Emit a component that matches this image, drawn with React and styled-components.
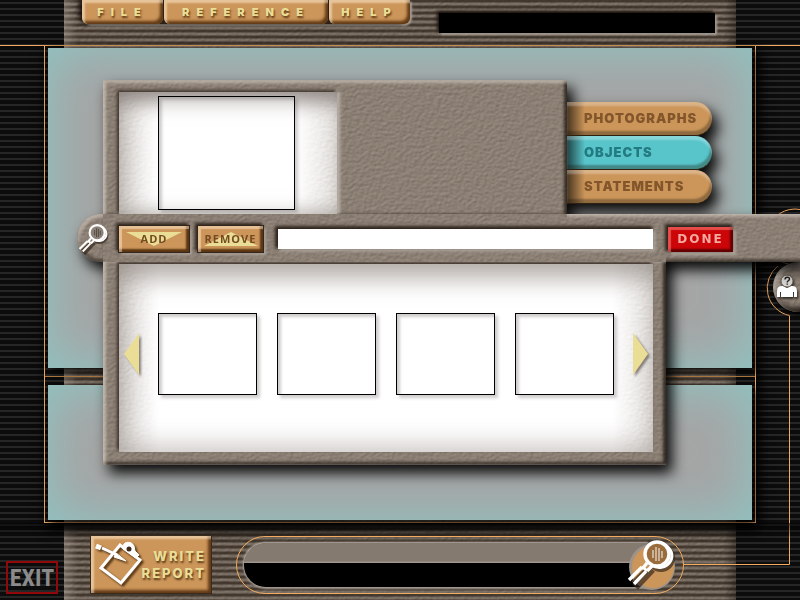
import React from "react";
import styled, { createGlobalStyle, css } from "styled-components";

const orange = "#f2ab60";
const copper = "#cc965a";
const cream = "#eadd96";

const leather = (light, depth) =>
  `url("data:image/svg+xml,${encodeURIComponent(
    `<svg xmlns='http://www.w3.org/2000/svg' width='240' height='240'><filter id='f' x='0' y='0' width='100%' height='100%' color-interpolation-filters='sRGB'><feTurbulence type='fractalNoise' baseFrequency='0.26 0.34' numOctaves='2' seed='8' stitchTiles='stitch'/><feDiffuseLighting surfaceScale='${depth}' diffuseConstant='1.18' lighting-color='${light}'><feDistantLight azimuth='235' elevation='58'/></feDiffuseLighting></filter><rect width='240' height='240' filter='url(#f)'/></svg>`
  )}")`;

const taupeLeather = leather("#8b7f74", 0.45);
const paleLeather = leather("#e2dfdc", 0.22);

const GlobalStyle = createGlobalStyle`
  *, *::before, *::after { box-sizing: border-box; }
  body { margin: 0; background: #0c0c0c; font-family: Inter, "Liberation Sans", sans-serif; }
  button, input { font: inherit; }
`;

const Page = styled.div`
  position: relative;
  isolation: isolate;
  display: flex;
  flex-direction: column;
  min-height: 100vh;
  overflow: hidden;
  background: repeating-linear-gradient(#0c0c0c 0 2px, #262626 2px 4px, #0c0c0c 4px 6px);

  &::before {
    content: "";
    position: absolute;
    z-index: -1;
    inset: 0 64px;
    background:
      linear-gradient(90deg, rgba(190, 180, 170, 0.35), transparent 14px, transparent calc(100% - 12px), rgba(0, 0, 0, 0.35)),
      repeating-linear-gradient(rgba(20, 10, 0, 0.6) 0 2px, rgba(20, 14, 8, 0.15) 3px 5px, rgba(20, 10, 0, 0.6) 6px),
      ${taupeLeather};
  }
`;

const Header = styled.header`
  display: flex;
  align-items: flex-start;
  height: 46px;
  padding: 0 85px 0 82px;
  border-bottom: 1px solid ${orange};
`;

const Menu = styled.nav`
  display: flex;
  gap: 1px;
  background: #2c2118;
  border-radius: 0 0 8px 8px;
  box-shadow: -3px 0 4px #17110c, 2px 2px 2px #aaa198;
`;

const raised = css`
  border: 0;
  background: ${copper};
  box-shadow:
    inset 3px 3px 2px rgba(255, 235, 210, 0.55),
    inset -3px -3px 3px rgba(70, 35, 5, 0.8);
`;

const MenuButton = styled.button`
  ${raised}
  width: ${(p) => p.$width};
  height: 24px;
  padding: 0;
  border-radius: 0 0 6px 6px;
  color: ${cream};
  font-size: 11px;
  font-weight: 900;
  line-height: 16px;
  letter-spacing: 7px;
  text-align: center;
  white-space: nowrap;
  text-shadow: 1px 2px 2px #5c3a16;
`;

const Display = styled.div`
  flex: 1;
  height: 20px;
  margin: 13px 0 0 29px;
  background: #000;
  box-shadow: -2px -2px 3px #1c140e, 2px 2px 2px #a89f97;
`;

const Frame = styled.main`
  display: flex;
  flex: 1;
  flex-direction: column;
  margin: 0 44px;
  padding: 2px 3px;
  border: solid ${orange};
  border-width: 0 1px 1px;
  box-shadow: 3px 6px 12px #000;
`;

const Panel = styled.section`
  flex: ${(p) => p.$share} 0 0px;
  background: #a5a5a5;
  box-shadow: inset 0 0 50px 4px #8fc4c2, 3px 5px 9px rgba(0, 0, 0, 0.85);
`;

const Divider = styled.hr`
  width: calc(100% + 6px);
  height: 1px;
  margin: 8px -3px;
  border: 0;
  background: #a8743d;
`;

const Footer = styled.footer`
  display: flex;
  align-items: flex-start;
  padding: 13px 116px 6px 6px;
  background: linear-gradient(rgba(0, 0, 0, 0.55), transparent 16px);
`;

const ExitButton = styled.button`
  width: 52px;
  height: 33px;
  margin: 25px 33px 0 0;
  padding: 0;
  border: 2px solid #900809;
  background: transparent;
  color: #8b8b8b;
  font-family: "Liberation Sans Narrow", "Roboto Condensed", "Liberation Sans", sans-serif;
  font-size: 24px;
  font-weight: 700;
  line-height: 28px;
`;

const ReportButton = styled.button`
  ${raised}
  display: flex;
  align-items: center;
  justify-content: space-between;
  width: 120px;
  height: 57px;
  margin-right: 25px;
  padding: 0 5px 0 3px;
  outline: 1px solid #3a2a1b;
  color: ${cream};
  text-align: right;

  svg { flex: none; margin-right: -14px; filter: drop-shadow(2px 2px 1px #4d2e10); }
`;

const ReportLine = styled.span`
  display: block;
  font-size: 13px;
  font-weight: 800;
  line-height: 17px;
  letter-spacing: 2px;
  text-shadow: 1px 2px 2px #5c3a16;
`;

const SearchDock = styled.div`
  display: flex;
  flex: 1;
  height: 58px;
  padding: 6px 4px 6px 7px;
  border: 1px solid ${orange};
  border-radius: 29px;
`;

const SearchScreen = styled.div`
  flex: 1;
  height: 44px;
  margin-right: -24px;
  border-radius: 22px 0 0 22px;
  background: linear-gradient(#857a70 0 18px, #a0968d 19px 20px, #000 20px);
  box-shadow: -1px -1px 2px #b7aea6, 0 2px 2px #a0978e;
`;

const SearchButton = styled.button`
  width: 54px;
  height: 54px;
  margin: -6px 0 0;
  padding: 0;
  border: 0;
  background: none;
`;

const Connector = styled.svg`
  position: absolute;
  z-index: -1;
  top: 200px;
  right: 0;
`;

const ProfileButton = styled.button`
  position: absolute;
  top: 262px;
  right: -23px;
  width: 50px;
  height: 50px;
  padding: 0 0 0 3px;
  border: 0;
  border-radius: 50%;
  background: ${taupeLeather};
  box-shadow: inset 3px 3px 4px rgba(225, 218, 210, 0.5), inset -3px -4px 6px #1c150f, 2px 3px 5px #000;
  text-align: left;

  svg { display: block; filter: drop-shadow(1px 2px 1px #332a22); }
`;

const Workbench = styled.div`
  position: absolute;
  top: 80px;
  right: 0;
  left: 77px;
  filter: drop-shadow(6px 8px 7px rgba(0, 0, 0, 0.95));
`;

const UpperRow = styled.div`
  display: flex;
  padding: 0 88px 0 26px;
`;

const UpperPlate = styled.div`
  flex: 1;
  padding: 12px 16px 0;
  background: ${taupeLeather};
  box-shadow: inset 3px 3px 3px rgba(225, 216, 207, 0.6), inset -3px 0 3px rgba(25, 18, 12, 0.75);
`;

const well = css`
  background:
    linear-gradient(90deg, transparent, #fff 40px, #fff calc(100% - 40px), transparent),
    ${paleLeather};
`;

const PreviewWell = styled.div`
  ${well}
  width: 218px;
  height: 122px;
  padding: 4px 42px 4px 39px;
  box-shadow:
    inset 0 24px 20px -14px rgba(110, 100, 95, 0.65),
    inset 0 -14px 14px -10px rgba(130, 120, 112, 0.25),
    inset 8px 0 22px rgba(130, 120, 112, 0.4),
    -2px -2px 3px #3d332b, 3px 0 3px #bbb2aa;
`;

const Slot = styled.div`
  height: ${(p) => p.$height};
  border: 1px solid #000;
  background: rgba(255, 255, 255, 0.4);
  box-shadow: inset 3px 3px 3px rgba(100, 94, 90, 0.3), 3px 3px 3px rgba(100, 94, 90, 0.3);
`;

const Tabs = styled.div`
  display: flex;
  flex-direction: column;
  width: 145px;
  padding-top: 22px;
`;

const Tab = styled.button`
  height: 34px;
  padding: 0 0 1px 17px;
  border: 0;
  border-bottom: 1px solid #30200f;
  border-radius: 0 17px 17px 0;
  background: linear-gradient(90deg, rgba(0, 0, 0, 0.65), transparent 18px), ${(p) => (p.$active ? "#58c5ca" : copper)};
  color: ${(p) => (p.$active ? "#237b81" : "#82562a")};
  font-size: 13px;
  font-weight: 900;
  line-height: 18px;
  letter-spacing: 1px;
  text-align: left;
  box-shadow: inset 0 4px 2px rgba(255, 255, 255, 0.28), inset -2px -4px 2px rgba(30, 25, 15, 0.35);
`;

const ToolBar = styled.div`
  position: relative;
  z-index: 1;
  display: flex;
  align-items: center;
  height: 48px;
  margin-left: 26px;
  padding: 2px 67px 0 0;
  background:
    linear-gradient(rgba(225, 216, 207, 0.6), transparent) right top / 233px 5px no-repeat,
    linear-gradient(transparent, rgba(25, 18, 12, 0.7)) right bottom / 134px 5px no-repeat,
    ${taupeLeather};

  &::before {
    content: "";
    position: absolute;
    z-index: -1;
    top: 0;
    left: -26px;
    width: 26px;
    height: 48px;
    border-radius: 24px 0 0 24px;
    background: ${taupeLeather};
    box-shadow: inset 3px 3px 3px rgba(225, 216, 207, 0.5), inset 1px -3px 3px rgba(25, 18, 12, 0.5);
  }
`;

const LensButton = styled.button`
  width: 34px;
  height: 34px;
  margin: 0 8px 0 -26px;
  padding: 0;
  border: 0;
  background: none;
`;

const sunken = css`
  outline: 1px solid #33271d;
  box-shadow:
    inset 3px 3px 1px rgba(255, 235, 210, 0.5),
    inset -3px -3px 2px rgba(70, 35, 5, 0.85),
    -2px -2px 3px 1px #2e241c,
    3px 3px 2px #aaa198;
`;

const ActionButton = styled.button`
  ${sunken}
  display: grid;
  place-items: center;
  width: ${(p) => p.$width};
  height: 26px;
  margin-right: ${(p) => p.$gap};
  padding: 0;
  border: 0;
  background: ${copper};
  color: #744a20;
  font-family: "Open Sans", sans-serif;
  font-size: 11px;
  font-weight: 700;
  line-height: 24px;
  letter-spacing: 1px;

  & > * { grid-area: 1 / 1; }
`;

const Arrowhead = styled.svg`
  display: block;
`;

const EntryField = styled.input`
  flex: 1;
  min-width: 0;
  height: 20px;
  padding: 0 4px;
  border: 0;
  border-radius: 0;
  outline: 0;
  background: #fff;
  box-shadow: -2px -2px 3px 1px #2e241c, 2px 2px 3px #bbb2aa;
`;

const DoneButton = styled.button`
  width: 65px;
  height: 25px;
  margin-left: 15px;
  padding: 0;
  border: 0;
  background: #cc0508;
  color: #f5a9a0;
  font-family: "DejaVu Sans", sans-serif;
  font-size: 12px;
  font-weight: 700;
  line-height: 22px;
  letter-spacing: 2px;
  box-shadow:
    inset 3px 3px 1px rgba(255, 150, 140, 0.5),
    inset -3px -3px 2px rgba(80, 0, 0, 0.85),
    -2px -2px 3px 1px #2e241c,
    3px 3px 2px #aaa198;
`;

const LowerPlate = styled.div`
  margin: 0 134px 0 26px;
  padding: 2px 13px 13px 16px;
  background: ${taupeLeather};
  box-shadow: inset 3px 0 3px rgba(225, 216, 207, 0.6), inset -3px -3px 3px rgba(25, 18, 12, 0.75);
`;

const GalleryWell = styled.div`
  ${well}
  display: flex;
  align-items: center;
  height: 188px;
  padding: 0 5px 8px;
  box-shadow:
    inset 0 28px 22px -12px rgba(130, 120, 112, 0.5),
    inset 6px -6px 26px rgba(130, 120, 112, 0.45),
    -2px -2px 3px #3d332b;
`;

const Thumbs = styled.ul`
  display: grid;
  grid-template-columns: repeat(4, 1fr);
  flex: 1;
  gap: 20px;
  margin: 0 19px;
  padding: 0;
  list-style: none;
`;

const PageButton = styled.button`
  display: flex;
  padding: 0;
  border: 0;
  background: none;
  filter: drop-shadow(2px 2px 1px rgba(70, 60, 55, 0.6));
`;

function Magnifier({ size, backed }) {
  return (
    <svg width={size} height={size} viewBox="0 0 54 54" fill="none" aria-hidden="true">
      {backed && <circle cx="27" cy="30" r="23" fill="#9d938a" />}
      {backed && <circle cx="28" cy="30" r="21" fill={copper} />}
      <g stroke="#33271d" strokeOpacity="0.7" strokeWidth="4" transform="translate(2 3)">
        <circle cx="34" cy="18" r="12" />
        <path d="M25 29 8 47" strokeWidth="8" />
      </g>
      <circle cx="32" cy="17" r="11" fill={backed ? "#9b6c3b" : "#8b8178"} />
      <path d="M37 6c10 5 12 13 8 19-4 6-12 7-19 3" stroke="#fff" strokeWidth="3" />
      <circle cx="32" cy="17" r="12" stroke="#fff" strokeWidth="3.4" />
      <path d="M28 13v8M31 10v14M34 11v13M37 14v7" stroke={backed ? "#ddd1c4" : "#4d443c"} strokeWidth="1.4" />
      <path d="M22 26 18 31M27 29l-5 5M17 30 4 43M21 34 9 47M17 30l5 4" stroke="#fff" strokeWidth="3.4" />
      <path d="M19 33 7 45" stroke="#54402c" strokeWidth="1.6" />
    </svg>
  );
}

function Clipboard() {
  return (
    <svg width="50" height="48" viewBox="0 0 50 48" fill="none" stroke="#fff" aria-hidden="true">
      <path d="M26 4 46 19 27 42 7 27Z" strokeWidth="3" />
      <path d="M29 5c1-5 9-5 11 0l1 5 4 4-3 3-13-9Z" fill="#fff" strokeWidth="1" />
      <circle cx="35" cy="8" r="2.5" fill="#3d2a18" stroke="none" />
      <path d="M2 5 7 7" strokeWidth="5" />
      <path d="M8 7 23 14" strokeWidth="3" />
      <path d="m22 12 10 8-12-4Z" fill="#fff" strokeWidth="1" />
    </svg>
  );
}

function Person() {
  return (
    <svg width="23" height="26" viewBox="0 0 23 26" aria-hidden="true">
      <path d="M1 23v-6q0-5 5-5h1l4 2 4-2h1q5 0 5 5v6h-3v-5h-1v5H5v-5H4v5Z" fill="#fff" />
      <circle cx="11" cy="7" r="6" fill="#d8d4d0" stroke="#6a6058" />
      <path d="M9 5.500c0-3 4.500-3 4.500-.500 0 1.800-2.300 1.800-2.300 3.500m0 1v1.300" fill="none" stroke="#222" strokeWidth="1.4" />
    </svg>
  );
}

export default function App() {
  return (
    <Page>
      <GlobalStyle />
      <Header>
        <Menu aria-label="Main">
          <MenuButton $width="81px">FILE</MenuButton>
          <MenuButton $width="164px">REFERENCE</MenuButton>
          <MenuButton $width="81px">HELP</MenuButton>
        </Menu>
        <Display />
      </Header>

      <Frame>
        <Panel $share={320} />
        <Divider />
        <Panel $share={135} />
      </Frame>

      <Connector width="120" height="370" viewBox="0 0 120 370" fill="none" stroke={orange} aria-hidden="true">
        <circle cx="115" cy="37" r="28" />
        <path d="M98 66A28 28 0 0 0 109.500 115.500V364.500H4" />
      </Connector>
      <ProfileButton aria-label="Profile">
        <Person />
      </ProfileButton>

      <Footer>
        <ExitButton>EXIT</ExitButton>
        <ReportButton>
          <Clipboard />
          <span>
            <ReportLine>WRITE</ReportLine>
            <ReportLine>REPORT</ReportLine>
          </span>
        </ReportButton>
        <SearchDock>
          <SearchScreen />
          <SearchButton aria-label="Search">
            <Magnifier size={54} backed />
          </SearchButton>
        </SearchDock>
      </Footer>

      <Workbench>
        <UpperRow>
          <UpperPlate>
            <PreviewWell>
              <Slot $height="114px" />
            </PreviewWell>
          </UpperPlate>
          <Tabs role="tablist">
            <Tab role="tab" aria-selected="false">PHOTOGRAPHS</Tab>
            <Tab role="tab" aria-selected="true" $active>OBJECTS</Tab>
            <Tab role="tab" aria-selected="false">STATEMENTS</Tab>
          </Tabs>
        </UpperRow>
        <ToolBar>
          <LensButton aria-label="Inspect">
            <Magnifier size={34} />
          </LensButton>
          <ActionButton $width="70px" $gap="9px">
            <Arrowhead width="56" height="14" aria-hidden="true">
              <path d="M0 0h56L28 14Z" fill={cream} />
            </Arrowhead>
            <span>ADD</span>
          </ActionButton>
          <ActionButton $width="65px" $gap="15px">
            <Arrowhead width="54" height="14" aria-hidden="true">
              <path d="M0 14h54L27 0Z" fill={cream} />
            </Arrowhead>
            <span>REMOVE</span>
          </ActionButton>
          <EntryField type="text" aria-label="Item name" />
          <DoneButton>DONE</DoneButton>
        </ToolBar>
        <LowerPlate>
          <GalleryWell>
            <PageButton aria-label="Previous">
              <Arrowhead width="15" height="42" aria-hidden="true">
                <path d="M15 0v42L0 21Z" fill={cream} />
              </Arrowhead>
            </PageButton>
            <Thumbs>
              {[1, 2, 3, 4].map((n) => (
                <Slot as="li" key={n} $height="82px" />
              ))}
            </Thumbs>
            <PageButton aria-label="Next">
              <Arrowhead width="15" height="42" aria-hidden="true">
                <path d="M0 0v42l15-21Z" fill={cream} />
              </Arrowhead>
            </PageButton>
          </GalleryWell>
        </LowerPlate>
      </Workbench>
    </Page>
  );
}
